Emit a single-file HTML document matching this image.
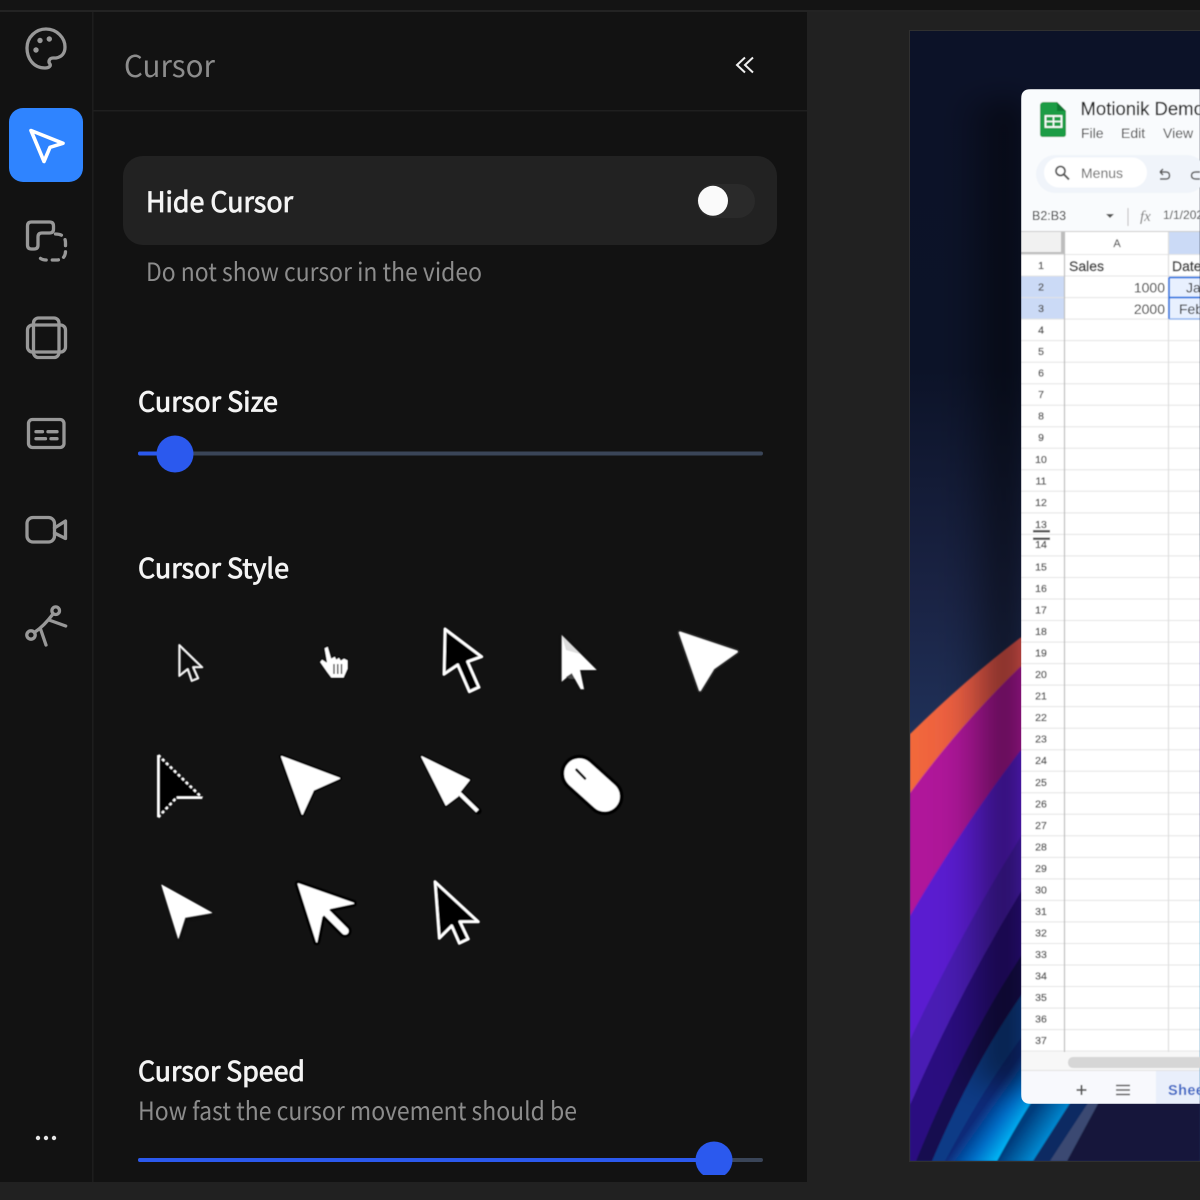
<!DOCTYPE html>
<html><head><meta charset="utf-8"><title>Cursor</title>
<style>
html,body{margin:0;padding:0;background:#212121;width:1200px;height:1200px;overflow:hidden}
svg{display:block}
.ui{font-family:"Noto Sans CJK JP","Liberation Sans",sans-serif}
.h{stroke:#f4f4f4;stroke-width:.8px}
.s{font-family:"Liberation Sans",sans-serif}
.rn text{font-family:"Liberation Sans",sans-serif;font-size:10.5px;font-weight:400;fill:#555;stroke:#555;stroke-width:.35px;text-anchor:middle}
</style></head><body>
<svg width="1200" height="1200" viewBox="0 0 1200 1200" xmlns="http://www.w3.org/2000/svg">
<defs>
<linearGradient id="bg" x1="0" y1="0" x2="0" y2="1"><stop offset="0" stop-color="#0c1228"/><stop offset=".3" stop-color="#0c1328"/><stop offset=".5" stop-color="#1a2344"/><stop offset=".62" stop-color="#1f3058"/><stop offset="1" stop-color="#1f3058"/></linearGradient>
<linearGradient id="org" x1="0" y1="0" x2="1" y2="0"><stop offset="0" stop-color="#f2683a"/><stop offset=".4" stop-color="#e2504e"/><stop offset="1" stop-color="#b0306a"/></linearGradient>
<linearGradient id="mag" x1="0" y1="0" x2="1" y2="0"><stop offset="0" stop-color="#b0149a"/><stop offset="1" stop-color="#a01490"/></linearGradient>
<linearGradient id="shade" x1="0" y1="0" x2="1" y2="0"><stop offset="0" stop-color="#000" stop-opacity="0"/><stop offset="1" stop-color="#000" stop-opacity=".6"/></linearGradient>
<linearGradient id="cyA" gradientUnits="userSpaceOnUse" x1="945" y1="1161" x2="979" y2="1185"><stop offset="0" stop-color="#0a2a78"/><stop offset=".55" stop-color="#0070c8"/><stop offset="1" stop-color="#00b4f4"/></linearGradient>
<linearGradient id="cyB" gradientUnits="userSpaceOnUse" x1="997" y1="1161" x2="1020" y2="1177"><stop offset="0" stop-color="#053c7c"/><stop offset="1" stop-color="#0088d0"/></linearGradient>
<clipPath id="wall"><rect x="910" y="31" width="290" height="1130"/></clipPath>
<clipPath id="panelclip"><rect x="93" y="12" width="714" height="1163"/></clipPath>
<clipPath id="sheetclip"><path d="M1031 89H1200V1104H1031Q1021 1104 1021 1094V99Q1021 89 1031 89Z"/></clipPath>
<filter id="soft" x="-10%" y="-10%" width="120%" height="120%"><feGaussianBlur stdDeviation=".55"/></filter>
<filter id="wsoft"><feGaussianBlur stdDeviation=".8"/></filter>
<filter id="big" x="-50%" y="-10%" width="200%" height="120%"><feGaussianBlur stdDeviation="14"/></filter>
<filter id="sh" x="-30%" y="-30%" width="160%" height="160%"><feGaussianBlur stdDeviation="1.5"/></filter>
<filter id="t"><feGaussianBlur stdDeviation=".25"/></filter>
<filter id="c" x="-10%" y="-10%" width="120%" height="120%"><feGaussianBlur stdDeviation=".4"/></filter>
</defs>

<rect width="1200" height="1200" fill="#212121"/>
<rect width="1200" height="10" fill="#141414"/>
<rect y="10" width="1200" height="2" fill="#232323"/>

<!-- Left rail and panel -->
<rect x="0" y="12" width="92" height="1170" fill="#121212"/>
<rect x="92" y="12" width="1.5" height="1170" fill="#1d1d1d"/>
<rect x="93.5" y="12" width="713.5" height="1170" fill="#121212"/>
<rect x="93.5" y="110" width="713.5" height="1.5" fill="#1f1f1f"/>

<!-- Rail icons -->
<g fill="none" stroke="#989898" stroke-width="3.3" stroke-linecap="round" stroke-linejoin="round">
<path d="M45 68C33 68 27 58 27 48C27 37 36 29 46 29C57 29 65 38 65 47C65 53 62 57 56 58H53C49 58 48 62 50 64C51 66 49 68 45 68Z"/>
<path d="M31.5 222H49.5Q53.5 222 53.5 226V229Q53.5 233 49.5 233H42Q38 233 38 237V245Q38 249 34 249H31.5Q27.5 249 27.5 245V226Q27.5 222 31.5 222Z"/>
<path d="M55.500 234Q65.500 234 65.500 243V251Q65.500 260 56 260H47Q38.500 260 38.500 254" stroke-dasharray="6 6"/>
<rect x="27.500" y="325" width="38" height="27" rx="5"/>
<rect x="33.500" y="318" width="25.500" height="39.500" rx="5"/>
<rect x="28.500" y="419.500" width="35.500" height="28" rx="4"/>
<path d="M36 431.700H42.500M48 431.700H57M36 438.700H45.500M51 438.700H57"/>
<rect x="27" y="517.500" width="27.500" height="24.500" rx="6"/>
<path d="M54.500 528L65.500 521V538.500L54.500 533"/>
<circle cx="55.700" cy="610.700" r="3.800"/>
<circle cx="31" cy="635" r="4.200"/>
<path d="M35 632C41 628 47 622 53 614M49 620L65.700 626M40.700 629.500L46 645"/>
</g>
<g fill="#989898"><circle cx="40" cy="40.500" r="2.700"/><circle cx="49.300" cy="39" r="2.700"/><circle cx="36" cy="50" r="2.700"/></g>
<rect x="9" y="108" width="74" height="74" rx="14" fill="#2f84ff"/>
<path d="M31 130.500L63 143.300L50 147.300L44 161.500Z" fill="none" stroke="#fff" stroke-width="3.600" stroke-linejoin="round"/>
<g fill="#e6e6e6"><circle cx="38" cy="1138" r="2.200"/><circle cx="46" cy="1138" r="2.200"/><circle cx="54" cy="1138" r="2.200"/></g>

<!-- Panel header -->
<text class="ui" x="124" y="77" font-size="30" fill="#8c8c8c" textLength="91" lengthAdjust="spacingAndGlyphs" filter="url(#t)">Cursor</text>
<path d="M745 57.500L737 65L745 72.500M753 57.500L745 65L753 72.500" fill="none" stroke="#eee" stroke-width="2"/>

<!-- Hide cursor card -->
<rect x="123" y="156" width="654" height="89" rx="20" fill="#222"/>
<text class="ui h" x="146" y="212" font-size="28" fill="#f4f4f4" textLength="147" lengthAdjust="spacingAndGlyphs" filter="url(#t)">Hide Cursor</text>
<rect x="697" y="184" width="58" height="34" rx="17" fill="#2a2a2a"/>
<circle cx="713" cy="200.800" r="15" fill="#fafafa"/>
<text class="ui" x="146" y="281" font-size="25" fill="#8c8c8c" textLength="336" lengthAdjust="spacingAndGlyphs" filter="url(#t)">Do not show cursor in the video</text>

<!-- Cursor Size -->
<text class="ui h" x="138" y="411.500" font-size="27" fill="#f4f4f4" textLength="140" lengthAdjust="spacingAndGlyphs" filter="url(#t)">Cursor Size</text>
<rect x="138" y="451.500" width="625" height="4" rx="2" fill="#3a4558"/>
<rect x="138" y="451.500" width="36" height="4" rx="2" fill="#2b59ee"/>
<circle cx="175" cy="454" r="18.500" fill="#2b59ee"/>

<!-- Cursor Style -->
<text class="ui h" x="138" y="578" font-size="27" fill="#f4f4f4" textLength="151" lengthAdjust="spacingAndGlyphs" filter="url(#t)">Cursor Style</text>

<g stroke-linejoin="round" filter="url(#c)">
<path d="M179.300 645V676L187.700 669.300L191.700 681L198.300 678.300L193.300 667.300H202.300Z" fill="#0a0a0a" stroke="#f8f8f8" stroke-width="2"/>
<path d="M324 648L328 646L331.500 658L335 656L336.500 659L339 657L341 660L344 658L348 660L348 669L344 678L331 678L326.500 672L319.500 662L322 659L326.500 662Z" fill="#fff" stroke="#000" stroke-width="1"/>
<path d="M334 664V674M337.800 664V674M341.500 664V674" stroke="#222" stroke-width="1.300"/>
<path d="M445 629L444 674.300L457.700 665L469.300 691.700L479 687.300L467.700 661.700L481.700 656.700Z" fill="#000" stroke="#fff" stroke-width="3"/>
<path d="M561.700 635V681.700L571.700 673.300L580.700 689.300H584L580 670H596.700Z" fill="#000" opacity=".5" filter="url(#sh)"/>
<path d="M561.700 635V681.700L571.700 673.300L580.700 689.300H584L580 670H596.700Z" fill="#fff"/>
<path d="M561.700 635L580 654L566 650Z" fill="#cfcfcf" opacity=".7"/>
<path d="M566 677L571.700 673.300L575 679L570 679Z" fill="#444"/>
<path d="M680 632.700L736.700 651.700L713.300 668.300L700 690Z" fill="#fff" stroke="#262626" stroke-width="6"/>
<path d="M680 632.700L736.700 651.700L713.300 668.300L700 690Z" fill="#fff" stroke="#fff" stroke-width="2"/>
<path d="M158.300 755V817.300L176.700 797.700H202.300Z" fill="#000"/>
<path d="M158.300 755V817.300M176.700 797.700H202.300" stroke="#fff" stroke-width="2.600" fill="none"/>
<path d="M158.300 755L202.300 797.700M158.300 817.300L176.700 797.700" stroke="#fff" stroke-width="2.600" fill="none" stroke-dasharray="3 2.500"/>
<path d="M281.700 756.700L339.300 778.300L313.300 790L302.300 814Z" fill="#000" stroke="#000" stroke-width="5"/>
<path d="M281.700 756.700L339.300 778.300L313.300 790L302.300 814Z" fill="#fff" stroke="#fff" stroke-width="1.500"/>
<path d="M421.700 756.700L469.300 780L460 791.700L458 796L446 805Z" fill="#000" stroke="#000" stroke-width="4"/>
<path d="M459 793L478 811" stroke="#000" stroke-width="7" stroke-linecap="round"/>
<path d="M421.700 756.700L469.300 780L460 791.700L458 796L446 805Z" fill="#fff" stroke="#fff" stroke-width="1.200"/>
<path d="M457 791L477.500 811" stroke="#fff" stroke-width="4"/>
<rect x="558" y="768" width="68" height="34" rx="17" transform="rotate(42 592 785)" fill="#fff" stroke="#000" stroke-width="3.500"/>
<path d="M576.500 769.800L585 778.500" stroke="#111" stroke-width="2.600" stroke-linecap="round"/>
<path d="M161.700 885L211.700 912.700L185 917.300L178.300 938.300Z" fill="#000" opacity=".6" filter="url(#sh)" transform="translate(1 2)"/>
<path d="M161.700 885L211.700 912.700L185 917.300L178.300 938.300Z" fill="#fff" stroke="#fff" stroke-width=".8"/>
<path d="M298.300 884L353.300 903.300L330 908.300L321.700 916.700L316.700 941.700Z" fill="#000" stroke="#000" stroke-width="7"/>
<path d="M326 912L345 931" stroke="#000" stroke-width="13" stroke-linecap="round"/>
<path d="M298.300 884L353.300 903.300L330 908.300L321.700 916.700L316.700 941.700Z" fill="#fff" stroke="#fff" stroke-width="1.500"/>
<path d="M324 910L345 931" stroke="#fff" stroke-width="7.500" stroke-linecap="round"/>
<path d="M435 881.700L439.300 938.300L451.700 926L459.300 943.300L468.300 939L460 921.700H478.300Z" fill="#000" stroke="#fff" stroke-width="3"/>
</g>

<!-- Cursor Speed -->
<text class="ui h" x="138" y="1081" font-size="27" fill="#f4f4f4" textLength="167" lengthAdjust="spacingAndGlyphs" filter="url(#t)">Cursor Speed</text>
<text class="ui" x="138" y="1120" font-size="25" fill="#8c8c8c" textLength="439" lengthAdjust="spacingAndGlyphs" filter="url(#t)">How fast the cursor movement should be</text>
<g clip-path="url(#panelclip)">
<rect x="138" y="1158" width="625" height="4" rx="2" fill="#3a4558"/>
<rect x="138" y="1158" width="576" height="4" rx="2" fill="#2b59ee"/>
<circle cx="714" cy="1160" r="18.500" fill="#2b59ee"/>
</g>

<!-- Wallpaper -->
<rect x="909" y="30" width="291" height="1132" fill="#303030"/>
<g clip-path="url(#wall)">
<rect x="910" y="31" width="290" height="1130" fill="url(#bg)"/>
<g filter="url(#wsoft)">
<path d="M910 734Q965 680 1020 638L1200 560V1161H910Z" fill="url(#org)"/>
<path d="M910 793Q960 725 1020 667L1200 600V1161H910Z" fill="url(#mag)"/>
<path d="M910 916Q960 830 1020 751L1200 650V1161H910Z" fill="#5a1fd0"/>
<path d="M910 1040Q965 925 1025 830L1200 700V1161H910Z" fill="#4a1cb4"/>
<path d="M910 1105Q960 990 1025 885L1200 760V1161H910Z" fill="#2a1080"/>
<path d="M916 1161Q965 1040 1025 950L1200 820V1161Z" fill="#180850"/>
<path d="M932 1161Q975 1060 1025 990L1200 860V1161Z" fill="#0a3a86"/>
<path d="M945 1161Q985 1085 1027 1030L1200 900V1161Z" fill="url(#cyA)"/>
<path d="M997 1161Q1025 1110 1040 1090L1200 1000V1161Z" fill="url(#cyB)"/>
<path d="M1033 1161L1072 1100H1200V1161Z" fill="#0b2c62"/>
<path d="M1050 1161L1090 1100H1200V1161Z" fill="#3a4a72"/>
<path d="M1067 1161L1100 1100H1200V1161Z" fill="#16193a"/>
</g>
<rect x="955" y="100" width="66" height="985" fill="url(#shade)" filter="url(#big)"/>
</g>

<!-- Spreadsheet window -->
<g clip-path="url(#sheetclip)" filter="url(#soft)">
<rect x="1021" y="89" width="179" height="1015" fill="#fff"/>
<rect x="1021" y="89" width="179" height="142" fill="#f9fbfd"/>
<path d="M1044 102H1057L1066 111V134Q1066 137 1063 137H1043Q1040 137 1040 134V106Q1040 102 1044 102Z" fill="#1a9c45"/>
<path d="M1057 102L1066 111H1057Z" fill="#0f7a33"/>
<rect x="1045.500" y="116" width="16" height="11" fill="none" stroke="#fff" stroke-width="1.800"/>
<path d="M1053.500 116V127M1045.500 121.500H1061.500" stroke="#fff" stroke-width="1.600"/>
<text class="s" x="1080.500" y="115" font-size="18.500" fill="#222" stroke="#222" stroke-width=".2">Motionik Demo</text>
<text class="s" x="1081" y="138" font-size="14" fill="#444">File</text>
<text class="s" x="1121" y="138" font-size="14" fill="#444">Edit</text>
<text class="s" x="1163" y="138" font-size="14" fill="#444">View</text>
<rect x="1036" y="155" width="170" height="38" rx="19" fill="#f0f4fa"/>
<rect x="1044" y="157.500" width="103" height="30" rx="15" fill="#fff"/>
<circle cx="1060.500" cy="171" r="4.500" fill="none" stroke="#555" stroke-width="1.800"/>
<path d="M1064 174.500L1069 179.500" stroke="#555" stroke-width="2"/>
<text class="s" x="1081" y="178" font-size="14" fill="#666">Menus</text>
<path d="M1160 172H1166Q1169.500 172 1169.500 175.500T1166 179H1160M1160 172L1163 169M1160 172L1163 175" fill="none" stroke="#555" stroke-width="1.500"/>
<path d="M1200 172H1196Q1191.500 172 1191.500 175.500T1196 179H1200" fill="none" stroke="#555" stroke-width="1.500"/>
<text class="s" x="1032" y="220" font-size="12.500" fill="#222">B2:B3</text>
<path d="M1106 214H1114L1110 218Z" fill="#555"/>
<rect x="1127.500" y="208" width="1" height="18" fill="#bbb"/>
<text x="1140" y="221" font-family="'Liberation Serif',serif" font-style="italic" font-size="15" fill="#777">fx</text>
<text class="s" x="1163" y="219" font-size="12" fill="#333">1/1/2024</text>
<rect x="1021" y="231" width="179" height="1" fill="#ccc"/>
<rect x="1021" y="232" width="42" height="21" fill="#f1f1f1"/>
<rect x="1061" y="232" width="3" height="23" fill="#bdbdbd"/>
<rect x="1021" y="252" width="43" height="3" fill="#bdbdbd"/>
<rect x="1168" y="232" width="32" height="22" fill="#cbdaf6"/>
<text class="s" x="1117" y="247" font-size="11" fill="#555" stroke="#555" stroke-width=".2" text-anchor="middle">A</text>
<rect x="1021" y="276" width="43" height="43" fill="#cbdaf6"/>
<rect x="1169" y="277" width="31" height="42" fill="#e8f0fe"/>
<path d="M1021 254.500H1200M1021 276H1200M1021 297.600H1200M1021 319.100H1200M1021 340.600H1200M1021 362.200H1200M1021 383.700H1200M1021 405.200H1200M1021 426.700H1200M1021 448.300H1200M1021 469.800H1200M1021 491.300H1200M1021 512.900H1200M1021 534.400H1200M1021 555.900H1200M1021 577.500H1200M1021 599H1200M1021 620.500H1200M1021 642.100H1200M1021 663.600H1200M1021 685.100H1200M1021 706.600H1200M1021 728.200H1200M1021 749.700H1200M1021 771.200H1200M1021 792.800H1200M1021 814.300H1200M1021 835.800H1200M1021 857.400H1200M1021 878.900H1200M1021 900.400H1200M1021 921.900H1200M1021 943.500H1200M1021 965H1200M1021 986.500H1200M1021 1008.100H1200M1021 1029.600H1200M1021 1051.100H1200" stroke="#e4e4e4" stroke-width="1"/>
<path d="M1064.500 232V1070" stroke="#bdbdbd" stroke-width="1.200"/>
<path d="M1168.500 232V1070" stroke="#dedede" stroke-width="1.200"/>
<path d="M1169 277.500H1200M1169 297.500H1200M1169 277.500V319" fill="none" stroke="#2a76e0" stroke-width="1.800"/>
<path d="M1169 319H1200" stroke="#7aa8ee" stroke-width="1.200"/>
<rect x="1033" y="530" width="17" height="2.500" fill="#555"/>
<rect x="1033" y="537.500" width="17" height="2.500" fill="#555"/>
<text class="s" x="1069" y="271" font-size="14" fill="#333" stroke="#333" stroke-width=".4">Sales</text>
<text class="s" x="1172" y="271" font-size="14" fill="#333" stroke="#333" stroke-width=".4">Date</text>
<text class="s" x="1165" y="292.500" font-size="14" fill="#222" text-anchor="end">1000</text>
<text class="s" x="1165" y="314" font-size="14" fill="#222" text-anchor="end">2000</text>
<text class="s" x="1186" y="292.500" font-size="14" fill="#222">Jan</text>
<text class="s" x="1179" y="314" font-size="14" fill="#222">Feb</text>
<g class="rn">
<text x="1041" y="269">1</text><text x="1041" y="290.500">2</text><text x="1041" y="312">3</text><text x="1041" y="333.600">4</text><text x="1041" y="355.100">5</text><text x="1041" y="376.600">6</text><text x="1041" y="398.200">7</text><text x="1041" y="419.700">8</text><text x="1041" y="441.200">9</text><text x="1041" y="462.800">10</text><text x="1041" y="484.300">11</text><text x="1041" y="505.800">12</text><text x="1041" y="528">13</text><text x="1041" y="548">14</text><text x="1041" y="570.400">15</text><text x="1041" y="592">16</text><text x="1041" y="613.500">17</text><text x="1041" y="635">18</text><text x="1041" y="656.600">19</text><text x="1041" y="678.100">20</text><text x="1041" y="699.600">21</text><text x="1041" y="721.200">22</text><text x="1041" y="742.700">23</text><text x="1041" y="764.200">24</text><text x="1041" y="785.800">25</text><text x="1041" y="807.300">26</text><text x="1041" y="828.800">27</text><text x="1041" y="850.400">28</text><text x="1041" y="871.900">29</text><text x="1041" y="893.400">30</text><text x="1041" y="915">31</text><text x="1041" y="936.500">32</text><text x="1041" y="958">33</text><text x="1041" y="979.600">34</text><text x="1041" y="1001.100">35</text><text x="1041" y="1022.600">36</text><text x="1041" y="1044.200">37</text>
</g>
<rect x="1021" y="1052" width="179" height="18" fill="#f7f7f7"/>
<rect x="1068" y="1057" width="140" height="11" rx="5" fill="#d6d6d6"/>
<rect x="1021" y="1070" width="179" height="34" fill="#f8f9fd"/>
<rect x="1021" y="1070" width="179" height="1" fill="#e2e2e2"/>
<path d="M1076.500 1090H1086.500M1081.500 1085V1095" stroke="#555" stroke-width="1.800"/>
<path d="M1116 1085.500H1130M1116 1090H1130M1116 1094.500H1130" stroke="#555" stroke-width="1.600"/>
<rect x="1156" y="1071" width="44" height="33" fill="#e9effb"/>
<text class="s" x="1168" y="1095" font-size="14.500" font-weight="700" letter-spacing=".4" fill="#3a66c5">Sheet1</text>
</g>
</svg>
</body></html>
